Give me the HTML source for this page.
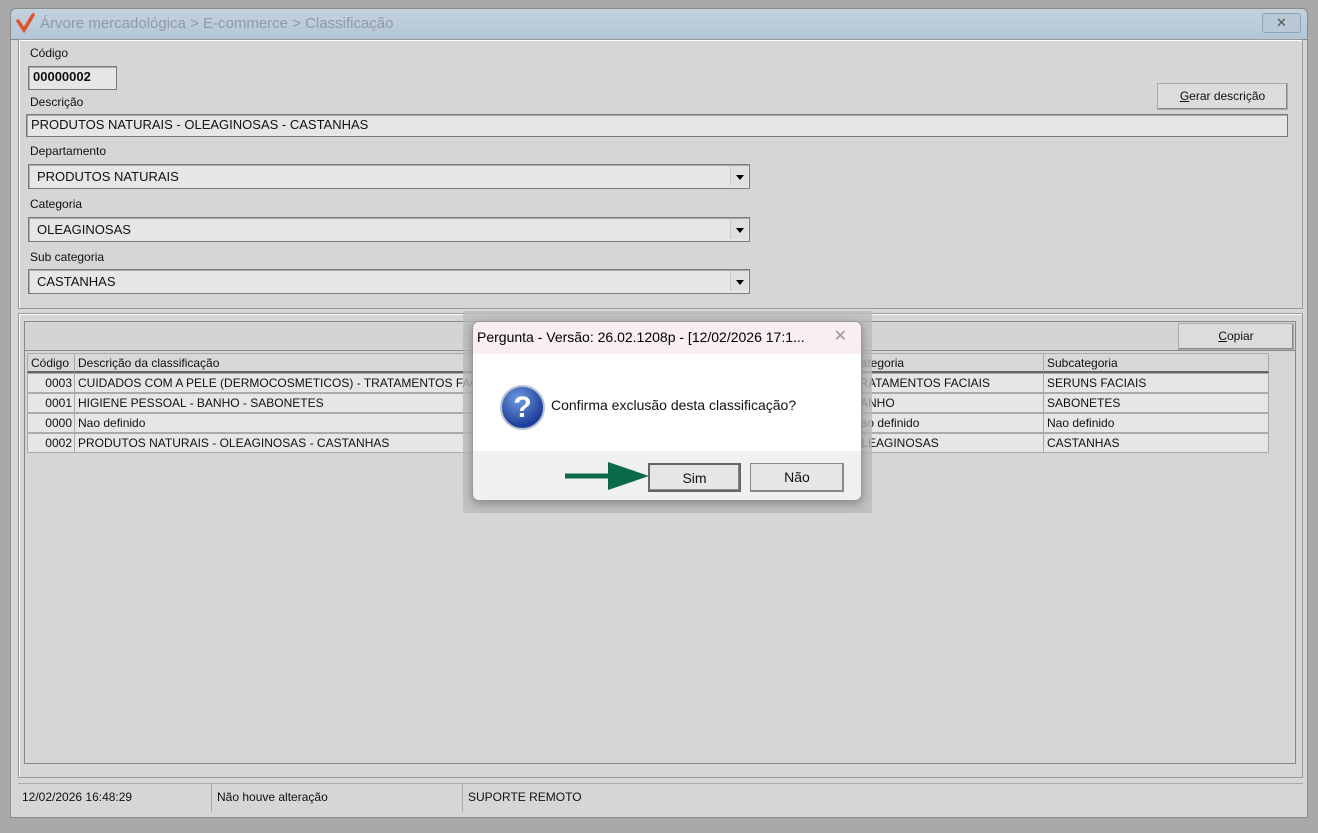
<!DOCTYPE html>
<html><head><meta charset="utf-8"><style>
*{box-sizing:border-box;margin:0;padding:0}
body{width:1318px;height:833px;background:#a9a9a9;font-family:"Liberation Sans",sans-serif;font-size:12px;color:#111;position:relative;overflow:hidden}
.a{position:absolute}
.win{left:10px;top:8px;width:1298px;height:810px;background:#d6d6d6;border:1px solid #8a8a8a;border-radius:6px 6px 0 0}
.title{left:10px;top:8px;width:1298px;height:32px;background:linear-gradient(#c4d2de,#b3c5d5);border-radius:6px 6px 0 0;border:1px solid #8a8a8a}
.panel{border:1px solid #9a9a9a;box-shadow:inset 1px 1px 0 #fff}
.inp{background:#e6e6e6;border:1px solid #7a7a7a;box-shadow:inset 1px 1px 0 #aaa;padding-left:4px;line-height:20px;font-size:13px}
.lbl{font-size:12px}
.dd{position:absolute;right:1px;top:1px;width:18px;height:20px;background:#e0e0e0;border-left:1px solid #ccc}
.dd:after{content:"";position:absolute;left:5px;top:9px;border:4px solid transparent;border-top:5px solid #000}
.btn{background:#dcdcdc;border:1px solid #aaa;box-shadow:inset -1px -1px 0 #888;text-align:center;font-size:12px}
.cell{position:absolute;height:20px;line-height:19px;border:1px solid #aaa;background:#e6e6e6;padding-left:3px;font-size:12px;white-space:nowrap;overflow:hidden}
.hd{background:#d8d8d8;border-bottom:2px solid #666}
</style></head><body>
<div class="a win"></div>
<div class="a title"></div>
<svg class="a" style="left:16px;top:13px" width="20" height="20"><path d="M2 8 L8 17 L17 2" stroke="#e0522a" stroke-width="3.5" fill="none" stroke-linecap="round"/></svg>
<div class="a" style="left:40px;top:15px;font-size:15px;color:#8f9aa4">Árvore mercadológica &gt; E-commerce &gt; Classificação</div>
<div class="a" style="left:1262px;top:13px;width:39px;height:20px;border:1px solid #8ea2b6;border-radius:3px;background:#b9c8d6;color:#555;text-align:center;font-size:13px;line-height:18px">✕</div>

<div class="a panel" style="left:18px;top:39px;width:1285px;height:270px"></div>
<div class="a lbl" style="left:30px;top:46px">Código</div>
<div class="a inp" style="left:28px;top:66px;width:89px;height:24px;font-weight:bold;font-size:13px">00000002</div>
<div class="a lbl" style="left:30px;top:95px">Descrição</div>
<div class="a inp" style="left:26px;top:114px;width:1262px;height:23px">PRODUTOS NATURAIS - OLEAGINOSAS - CASTANHAS</div>
<div class="a btn" style="left:1157px;top:83px;width:131px;height:27px;line-height:25px"><u>G</u>erar descrição</div>
<div class="a lbl" style="left:30px;top:144px">Departamento</div>
<div class="a inp" style="left:28px;top:164px;width:722px;height:25px;padding-left:8px;line-height:23px">PRODUTOS NATURAIS<span class="dd"></span></div>
<div class="a lbl" style="left:30px;top:197px">Categoria</div>
<div class="a inp" style="left:28px;top:217px;width:722px;height:25px;padding-left:8px;line-height:23px">OLEAGINOSAS<span class="dd"></span></div>
<div class="a lbl" style="left:30px;top:250px">Sub categoria</div>
<div class="a inp" style="left:28px;top:269px;width:722px;height:25px;padding-left:8px;line-height:23px">CASTANHAS<span class="dd"></span></div>

<div class="a panel" style="left:18px;top:313px;width:1285px;height:465px"></div>
<div class="a" style="left:24px;top:321px;width:1272px;height:30px;border:1px solid #888;background:#d4d4d4"></div>
<div class="a btn" style="left:1178px;top:323px;width:116px;height:27px;line-height:25px"><u>C</u>opiar</div>
<div class="a" style="left:24px;top:351px;width:1272px;height:413px;border:1px solid #888;border-top:none"></div>

<div class="cell hd" style="left:27px;top:353px;width:48px">Código</div>
<div class="cell hd" style="left:74px;top:353px;width:775px">Descrição da classificação</div>
<div class="cell hd" style="left:848px;top:353px;width:196px">Categoria</div>
<div class="cell hd" style="left:1043px;top:353px;width:226px">Subcategoria</div>

<div class="cell" style="left:27px;top:373px;width:48px;text-align:right;padding-right:2px">0003</div>
<div class="cell" style="left:74px;top:373px;width:775px">CUIDADOS COM A PELE (DERMOCOSMETICOS) - TRATAMENTOS FACIAIS - SERUNS FACIAIS</div>
<div class="cell" style="left:848px;top:373px;width:196px">TRATAMENTOS FACIAIS</div>
<div class="cell" style="left:1043px;top:373px;width:226px">SERUNS FACIAIS</div>

<div class="cell" style="left:27px;top:393px;width:48px;text-align:right;padding-right:2px">0001</div>
<div class="cell" style="left:74px;top:393px;width:775px">HIGIENE PESSOAL - BANHO - SABONETES</div>
<div class="cell" style="left:848px;top:393px;width:196px">BANHO</div>
<div class="cell" style="left:1043px;top:393px;width:226px">SABONETES</div>

<div class="cell" style="left:27px;top:413px;width:48px;text-align:right;padding-right:2px">0000</div>
<div class="cell" style="left:74px;top:413px;width:775px">Nao definido</div>
<div class="cell" style="left:848px;top:413px;width:196px">Nao definido</div>
<div class="cell" style="left:1043px;top:413px;width:226px">Nao definido</div>

<div class="cell" style="left:27px;top:433px;width:48px;text-align:right;padding-right:2px">0002</div>
<div class="cell" style="left:74px;top:433px;width:775px">PRODUTOS NATURAIS - OLEAGINOSAS - CASTANHAS</div>
<div class="cell" style="left:848px;top:433px;width:196px">OLEAGINOSAS</div>
<div class="cell" style="left:1043px;top:433px;width:226px">CASTANHAS</div>

<div class="a" style="left:18px;top:783px;width:1285px;height:30px;border-top:1px solid #aaa"></div>
<div class="a" style="left:18px;top:784px;width:194px;height:28px;border-right:1px solid #aaa;padding:6px 4px">12/02/2026 16:48:29</div>
<div class="a" style="left:212px;top:784px;width:251px;height:28px;border-right:1px solid #aaa;padding:6px 5px">Não houve alteração</div>
<div class="a" style="left:463px;top:784px;width:400px;height:28px;padding:6px 5px">SUPORTE REMOTO</div>

<div class="a" style="left:463px;top:311px;width:409px;height:202px;background:#bcbcbc;opacity:.8"></div>
<div class="a" style="left:472px;top:321px;width:390px;height:180px;background:#f0f0f0;border:1px solid #999;border-radius:7px;overflow:hidden;box-shadow:0 3px 10px rgba(0,0,0,.3)">
 <div style="height:32px;background:#f9eef2;font-size:14px;line-height:30px;padding-left:4px;color:#000">Pergunta - Versão: 26.02.1208p - [12/02/2026 17:1...<span style="position:absolute;right:14px;top:0;color:#999;font-size:16px">✕</span></div>
 <div style="height:97px;background:#fff;position:relative">
  <div style="position:absolute;left:27px;top:31px;width:45px;height:45px;border-radius:50%;background:radial-gradient(circle at 40% 30%,#6f9be0,#1d3f9a 70%);border:2px solid #b8c2d4;color:#fff;font-size:30px;font-weight:bold;text-align:center;line-height:41px">?</div>
  <div style="position:absolute;left:78px;top:43px;font-size:14px">Confirma exclusão desta classificação?</div>
 </div>
 <div class="btn" style="position:absolute;left:175px;top:141px;width:93px;height:29px;line-height:27px;font-size:14px;background:#e6e6e6;border:2px solid #666">Sim</div>
 <div class="btn" style="position:absolute;left:277px;top:141px;width:94px;height:29px;line-height:27px;font-size:14px;background:#e6e6e6;border:1px solid #888">Não</div>
</div>
<svg class="a" style="left:563px;top:460px" width="90" height="32"><path d="M2 16 H50" stroke="#0b6b48" stroke-width="5"/><path d="M45 2 L86 16 L45 30 Z" fill="#0b6b48"/></svg>
</body></html>
